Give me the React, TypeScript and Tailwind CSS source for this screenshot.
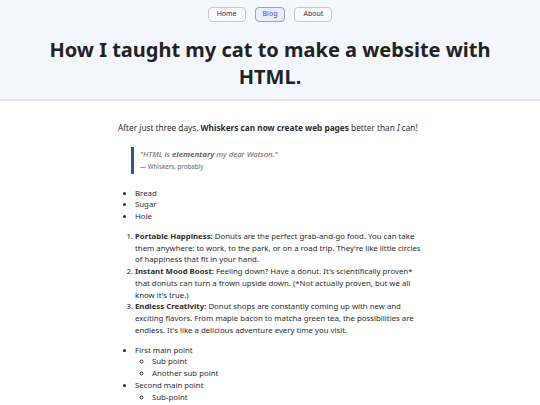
export default function App() {
  const navItems = ["Home", "Blog", "About"];

  return (
    <div className="min-h-screen bg-white text-[#2d2d2d] [font-family:'Noto_Sans',sans-serif]">
      <header className="bg-[#f5f7ff] border-b-2 border-[#e3e3ea] px-[30px] pt-[7px] pb-[9px]">
        <nav className="flex justify-center gap-[9px]">
          {navItems.map((item) => (
            <a
              key={item}
              className={
                item === "Blog"
                  ? "h-[15px] px-[7px] flex items-center rounded-[4px] border border-[#8ea3cf] bg-[#e8eefb] text-[7px] text-[#3a5590]"
                  : "h-[15px] px-[8px] flex items-center rounded-[4px] border border-[#c6c9d1] bg-[#f9faff] text-[7px] text-[#333]"
              }
            >
              {item}
            </a>
          ))}
        </nav>
        <h1 className="mt-[14px] text-center text-[20px] leading-[27px] font-bold text-[#222]">
          How I taught my cat to make a website with HTML.
        </h1>
      </header>

      <main className="mx-auto w-[304px] pt-[21px] text-[7.8px] leading-[11.75px]">
        <p className="text-[8.25px]">
          After just three days, <strong>Whiskers can now create web pages</strong> better
          than <em>I</em> can!
        </p>

        <blockquote className="mt-[13px] ml-[13px] border-l-[3px] border-[#2f5596] pl-[6px] py-[2px] text-[#666]">
          <p className="italic">
            "HTML is <strong>elementary</strong> my dear Watson."
          </p>
          <p className="text-[6.2px] leading-[11px]">— Whiskers, probably</p>
        </blockquote>

        <ul className="mt-[14px] list-disc pl-[17px]">
          <li>Bread</li>
          <li>Sugar</li>
          <li>Hole</li>
        </ul>

        <ol className="mt-[8px] list-decimal pl-[17px]">
          <li>
            <strong>Portable Happiness:</strong> Donuts are the perfect grab-and-go food. You
            can take them anywhere: to work, to the park, or on a road trip. They're like
            little circles of happiness that fit in your hand.
          </li>
          <li>
            <strong>Instant Mood Boost:</strong> Feeling down? Have a donut. It's
            scientifically proven* that donuts can turn a frown upside down. (*Not actually
            proven, but we all know it's true.)
          </li>
          <li>
            <strong>Endless Creativity:</strong> Donut shops are constantly coming up with new
            and exciting flavors. From maple bacon to matcha green tea, the possibilities are
            endless. It's like a delicious adventure every time you visit.
          </li>
        </ol>

        <ul className="mt-[8px] list-disc pl-[17px]">
          <li>
            First main point
            <ul className="list-[circle] pl-[17px]">
              <li>Sub point</li>
              <li>Another sub point</li>
            </ul>
          </li>
          <li>
            Second main point
            <ul className="list-[circle] pl-[17px]">
              <li>Sub-point</li>
            </ul>
          </li>
        </ul>
      </main>
    </div>
  );
}
